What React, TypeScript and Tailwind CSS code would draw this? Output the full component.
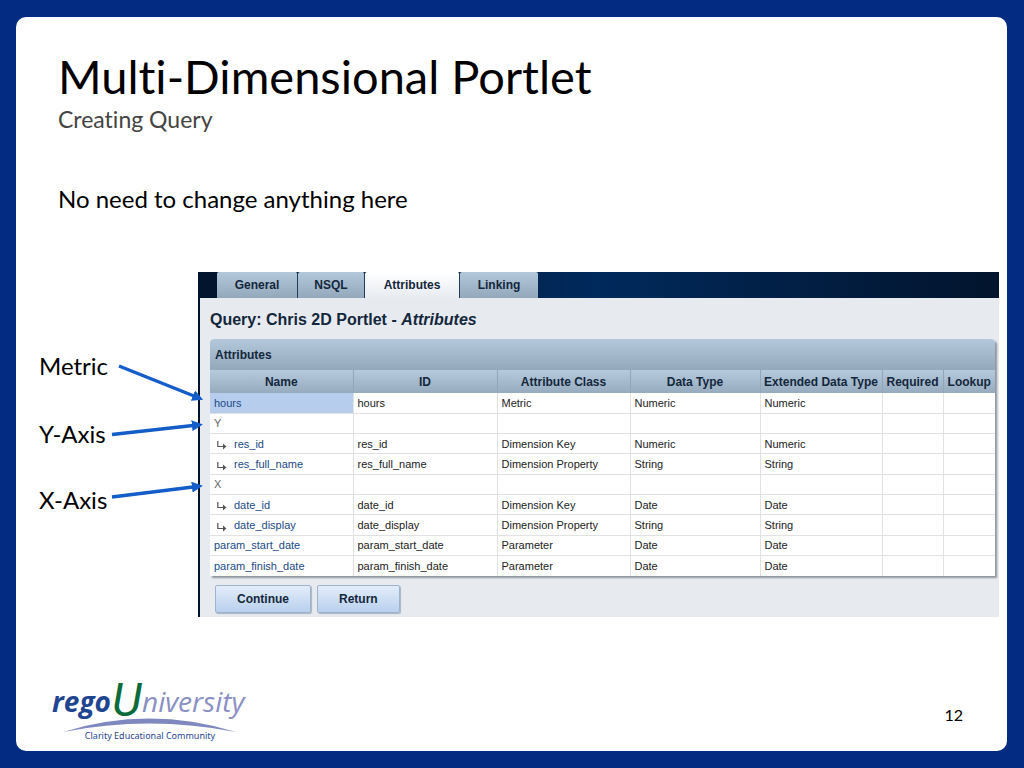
import clsx from 'clsx';

const tabs = [
  { label: 'General', width: 'w-[81px]' },
  { label: 'NSQL', width: 'w-[67px]' },
  { label: 'Attributes', width: 'w-[95px]', active: true },
  { label: 'Linking', width: 'w-[78px]' }
];

const columns = [
  { label: 'Name', width: 'w-[143px]' },
  { label: 'ID', width: 'w-[144px]' },
  { label: 'Attribute Class', width: 'w-[133px]' },
  { label: 'Data Type', width: 'w-[130px]' },
  { label: 'Extended Data Type', width: 'w-[122px]' },
  { label: 'Required', width: 'w-[61px]' },
  { label: 'Lookup', width: 'w-[52px]' }
];

type Row = { name: string; kind?: 'group' | 'child'; attribute?: string; type?: string; selected?: boolean };

const rows: Row[] = [
  { name: 'hours', attribute: 'Metric', type: 'Numeric', selected: true },
  { name: 'Y', kind: 'group' },
  { name: 'res_id', kind: 'child', attribute: 'Dimension Key', type: 'Numeric' },
  { name: 'res_full_name', kind: 'child', attribute: 'Dimension Property', type: 'String' },
  { name: 'X', kind: 'group' },
  { name: 'date_id', kind: 'child', attribute: 'Dimension Key', type: 'Date' },
  { name: 'date_display', kind: 'child', attribute: 'Dimension Property', type: 'String' },
  { name: 'param_start_date', attribute: 'Parameter', type: 'Date' },
  { name: 'param_finish_date', attribute: 'Parameter', type: 'Date' }
];

function ChildArrow() {
  return (
    <svg viewBox="0 0 10 9" className="ml-[3px] mr-[7px] mt-1 h-[9px] w-[10px] shrink-0" fill="none" stroke="#555" strokeWidth="1.2">
      <path d="M0.8 0V5.5H8" />
      <path d="M6 2.6L9.4 5.5L6 8.4Z" fill="#555" stroke="none" />
    </svg>
  );
}

function NameCell({ row }: { row: Row }) {
  if (row.kind === 'group') return <span className="text-[#666]">{row.name}</span>;
  return (
    <span className="flex items-center">
      {row.kind === 'child' && <ChildArrow />}
      <a href="#" className="text-[#1b4a86]">{row.name}</a>
    </span>
  );
}

function AttributesTable() {
  return (
    <section className="rounded-t bg-white shadow-[2px_2px_2px_#8f959b]">
      <h3 className="flex h-[31px] items-center rounded-t bg-linear-to-b from-[#b3c8db] to-[#93a8bb] px-[5px] text-[12px] font-bold">
        Attributes
      </h3>
      <table className="h-[206px] w-full table-fixed border-collapse">
        <thead>
          <tr className="h-[23px] bg-linear-to-b from-[#b5cadd] to-[#96abbe]">
            {columns.map((column) => (
              <th
                key={column.label}
                className={clsx(
                  column.width,
                  'border-r border-[#91a6ba] p-0 text-center text-[12px] font-bold whitespace-nowrap last:border-r-0'
                )}
              >
                {column.label}
              </th>
            ))}
          </tr>
        </thead>
        <tbody className="text-[11px] text-[#222]">
          {rows.map((row) => {
            const group = row.kind === 'group';
            const cells = [group ? '' : row.name, row.attribute, row.type, row.type, '', ''];
            return (
              <tr key={row.name} className="h-[20px] border-b border-[#e2e2e2] last:border-b-0">
                <td className={clsx('border-r border-[#e2e2e2] px-1 py-0', row.selected && 'bg-[#b7cdee]')}>
                  <NameCell row={row} />
                </td>
                {cells.map((cell, i) => (
                  <td key={i} className="border-r border-[#e2e2e2] px-1 py-0 whitespace-nowrap last:border-r-0">
                    {cell}
                  </td>
                ))}
              </tr>
            );
          })}
        </tbody>
      </table>
    </section>
  );
}

function QueryPanel() {
  return (
    <div className="min-w-0 flex-1 bg-[#e7ebf0] font-['Liberation_Sans',Arial,sans-serif] text-[#14273c]">
      <nav className="flex h-[26px] bg-linear-to-r from-[#02142d] via-[#002a5c] to-[#02142d] pl-[19px]">
        {tabs.map((tab) => (
          <button
            key={tab.label}
            type="button"
            className={clsx(
              tab.width,
              'rounded-t-xs border-r border-[#1f3c5c] text-[12px] font-bold last:border-r-0',
              tab.active ? 'bg-linear-to-b from-white to-[#e7ebf0]' : 'bg-linear-to-b from-[#b3c8db] to-[#93a8bb]'
            )}
          >
            {tab.label}
          </button>
        ))}
      </nav>
      <div className="border-l-2 border-[#02142d] pr-1 pb-1 pl-[10px]">
        <h2 className="pt-[13px] pb-[10px] text-[16px] leading-[18px] font-bold">
          Query: Chris 2D Portlet - <em>Attributes</em>
        </h2>
        <AttributesTable />
        <div className="flex gap-[6px] px-[5px] pt-[9px]">
          {['Continue', 'Return'].map((label) => (
            <button
              key={label}
              type="button"
              className="h-[28px] rounded-xs border border-[#9db2cb] bg-linear-to-b from-[#e3edf9] to-[#b9d0ee] px-[21px] text-[12px] font-bold shadow-[1px_1px_1px_#a9b4c2]"
            >
              {label}
            </button>
          ))}
        </div>
      </div>
    </div>
  );
}

function Callouts() {
  return (
    <>
      <ul className="w-[182px] shrink-0 pt-[80px] pl-[23px] text-[24px] leading-[28px]">
        <li>Metric</li>
        <li className="pt-10">Y-Axis</li>
        <li className="pt-[38px]">X-Axis</li>
      </ul>
      {/* the arrows run from the labels onto the panel's rows */}
      <svg viewBox="0 0 190 240" className="pointer-events-none absolute top-0 left-0 h-[240px] w-[190px]" stroke="#145cc8" strokeWidth="3.4">
        <defs>
          <marker id="head" viewBox="0 0 10 10" refX="1" refY="5" markerWidth="11" markerHeight="11" markerUnits="userSpaceOnUse" orient="auto">
            <path d="M0 0L10 5L0 10Z" fill="#145cc8" stroke="none" />
          </marker>
        </defs>
        <path d="M103 94L178 124" markerEnd="url(#head)" />
        <path d="M96 162.500L177 153.500" markerEnd="url(#head)" />
        <path d="M96 225L177 215" markerEnd="url(#head)" />
      </svg>
    </>
  );
}

function Logo() {
  return (
    <svg viewBox="0 0 204 80" className="h-[80px] w-[204px]" role="img" aria-label="regoUniversity">
      <g fontFamily="'Open Sans', sans-serif" fontStyle="italic">
        <text x="1" y="48" fontSize="28" fontWeight="700" fill="#1f4590">rego</text>
        <text x="61" y="52" fontSize="47" fontWeight="400" fill="#0b6b3a" fontFamily="Roboto, sans-serif">U</text>
        <text x="91" y="48" fontSize="28" fill="#8a8fc4">niversity</text>
      </g>
      <path d="M12 68Q98 41 185 68Q98 51 12 68Z" fill="#7f89c0" />
      <text x="99" y="75" fontSize="9" textAnchor="middle" fill="#1f4590" fontFamily="'Noto Sans', sans-serif">
        Clarity Educational Community
      </text>
    </svg>
  );
}

export default function App() {
  return (
    <div className="flex min-h-screen flex-col bg-[#032b82] py-[17px] pr-[17px] pl-4 font-[Lato,'Open_Sans',sans-serif] text-black [font-variant-ligatures:none]">
      <main className="flex flex-1 flex-col rounded-[10px] bg-white">
        <header className="px-[42px] pt-8">
          <h1 className="text-[47px] leading-[54px]">Multi-Dimensional Portlet</h1>
          <p className="pt-[2px] text-[23px] leading-[28px] text-[#444]">Creating Query</p>
        </header>
        <p className="px-[42px] pt-[52px] text-[24px] leading-[28px]">No need to change anything here</p>
        <div className="relative mt-[59px] flex pr-2">
          <Callouts />
          <QueryPanel />
        </div>
        <footer className="mt-auto flex items-end justify-between pr-11 pb-[7px] pl-[35px]">
          <Logo />
          <span className="pb-[19px] text-[16px] leading-5">12</span>
        </footer>
      </main>
    </div>
  );
}
